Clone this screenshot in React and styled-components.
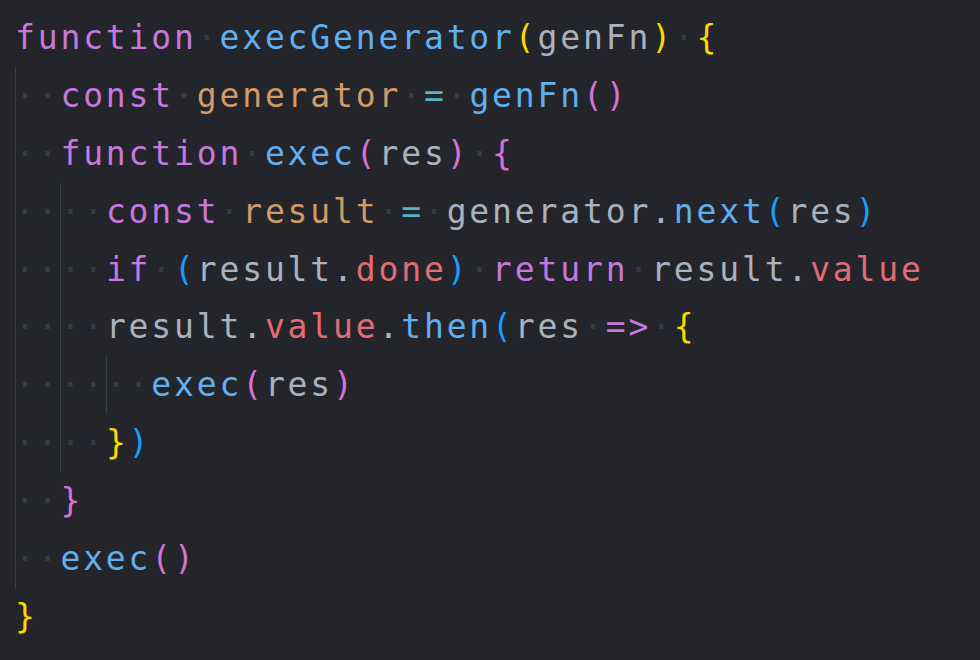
import React from 'react'
import styled, {createGlobalStyle} from 'styled-components'

const C = {
    kw: '#c678dd',
    fn: '#61afef',
    vr: '#d19a66',
    op: '#56b6c2',
    tx: '#abb2bf',
    pr: '#e06c75',
    b1: '#ffd700',
    b2: '#da70d6',
    b3: '#179fff',
}

const GlobalStyle = createGlobalStyle`
    html, body {
        margin: 0;
        padding: 0;
        background: #23252b;
    }
`

const Editor = styled.div`
    width: 980px;
    height: 660px;
    box-sizing: border-box;
    padding: 9px 0 0 15px;
    background: #23252b;
    font-family: "DejaVu Sans Mono", monospace;
    font-size: 33px;
    letter-spacing: 2.85px;
    overflow: hidden;
`

const Line = styled.div`
    display: flex;
    height: 57.9px;
    line-height: 57.9px;
    white-space: pre;
`

const IndentUnit = styled.span`
    box-shadow: inset 1px 0 0 #3a3d44;
    color: #383b42;
`

const Space = styled.span`
    color: #383b42;
`

const Token = styled.span`
    color: ${props => props.color};
`

const code = [
    [0, [['function', C.kw], ' ', ['execGenerator', C.fn], ['(', C.b1], ['genFn', C.tx], [')', C.b1], ' ', ['{', C.b1]]],
    [1, [['const', C.kw], ' ', ['generator', C.vr], ' ', ['=', C.op], ' ', ['genFn', C.fn], ['()', C.b2]]],
    [1, [['function', C.kw], ' ', ['exec', C.fn], ['(', C.b2], ['res', C.tx], [')', C.b2], ' ', ['{', C.b2]]],
    [2, [['const', C.kw], ' ', ['result', C.vr], ' ', ['=', C.op], ' ', ['generator.', C.tx], ['next', C.fn], ['(', C.b3], ['res', C.tx], [')', C.b3]]],
    [2, [['if', C.kw], ' ', ['(', C.b3], ['result.', C.tx], ['done', C.pr], [')', C.b3], ' ', ['return', C.kw], ' ', ['result.', C.tx], ['value', C.pr]]],
    [2, [['result.', C.tx], ['value', C.pr], ['.', C.tx], ['then', C.fn], ['(', C.b3], ['res', C.tx], ' ', ['=>', C.kw], ' ', ['{', C.b1]]],
    [3, [['exec', C.fn], ['(', C.b2], ['res', C.tx], [')', C.b2]]],
    [2, [['}', C.b1], [')', C.b3]]],
    [1, [['}', C.b2]]],
    [1, [['exec', C.fn], ['()', C.b2]]],
    [0, [['}', C.b1]]],
]

const CodeLine = ({indent, tokens}) => (
    <Line>
        {Array.from({length: indent}, (_, i) => (
            <IndentUnit key={'i' + i}>{'\u00b7\u00b7'}</IndentUnit>
        ))}
        <span>
            {tokens.map((t, i) =>
                t === ' '
                    ? <Space key={i}>{'\u00b7'}</Space>
                    : <Token key={i} color={t[1]}>{t[0]}</Token>
            )}
        </span>
    </Line>
)

const App = () => (
    <>
        <GlobalStyle/>
        <Editor>
            {code.map(([indent, tokens], i) => (
                <CodeLine key={i} indent={indent} tokens={tokens}/>
            ))}
        </Editor>
    </>
)

export default App
